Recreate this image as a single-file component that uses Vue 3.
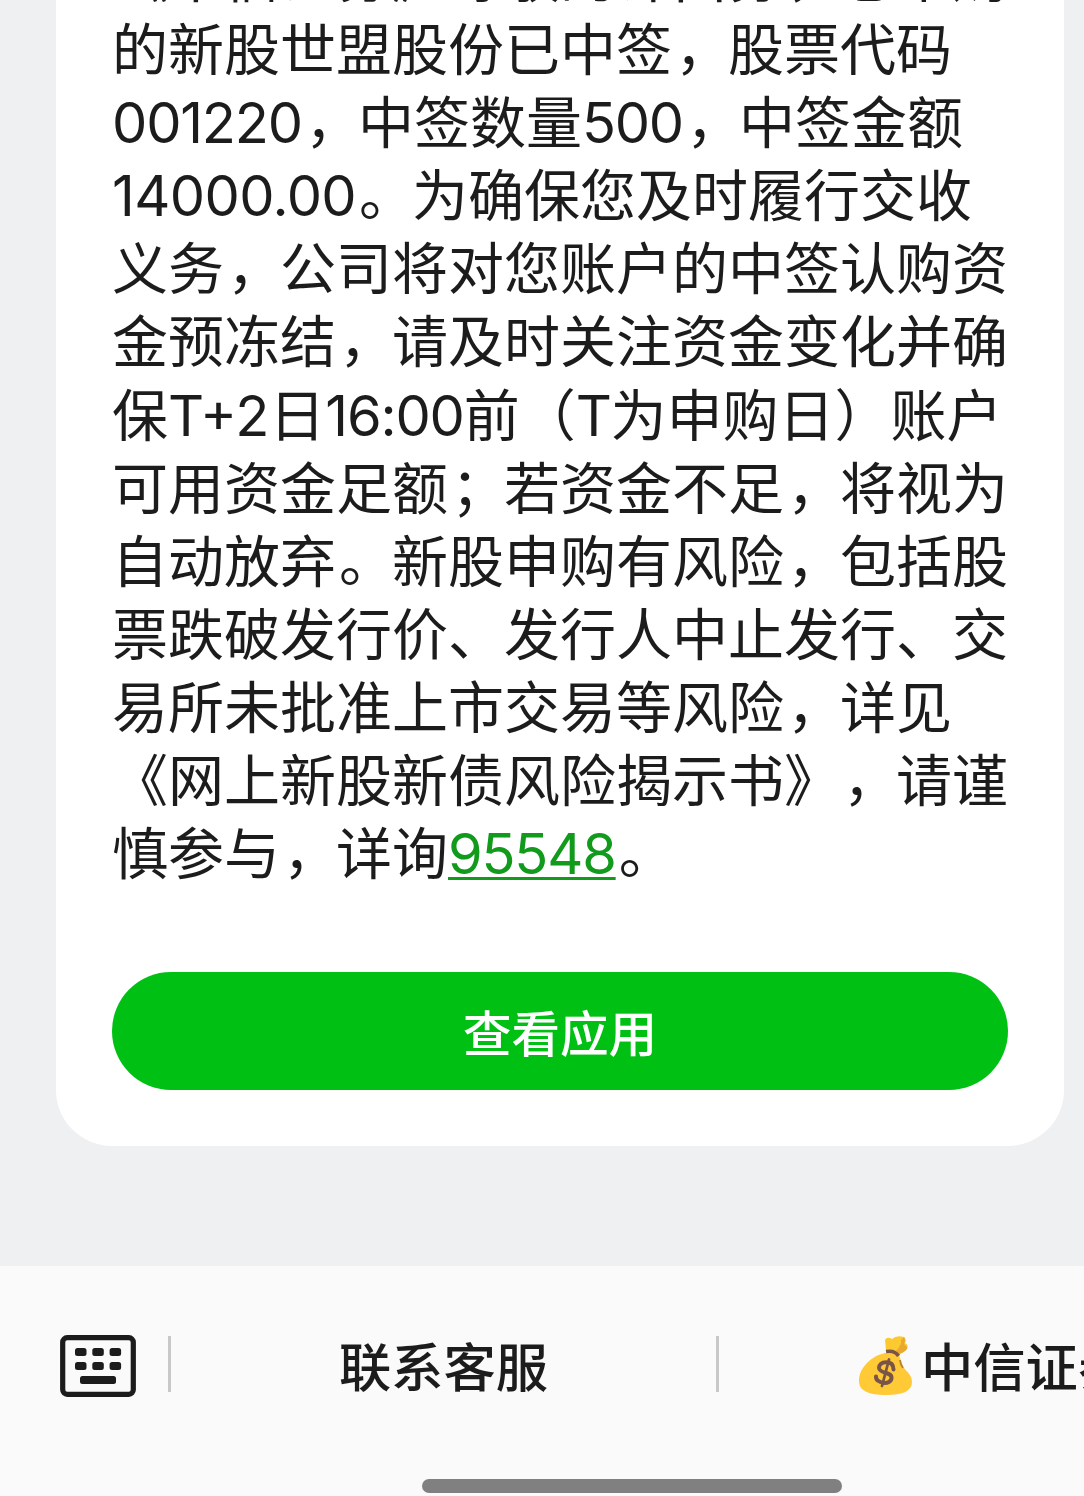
<script setup>
const source = [
  ['《中信证券》尊敬的许昌芬，您申购'],
  ['的新股世盟股份已中签，股票代码'],
  [{ n: '001220', s: -1.2 }, '，中签数量', { n: '500', s: -1.2 }, '，中签金额'],
  [{ n: '14000.00', s: -0.6 }, '。为确保您及时履行交收'],
  ['义务，公司将对您账户的中签认购资'],
  ['金预冻结，请及时关注资金变化并确'],
  ['保', { n: 'T+2', s: 0 }, '日', { n: '16:00', s: -1.2 }, '前（', { n: 'T', s: -1.2 }, '为申购日）账户'],
  ['可用资金足额；若资金不足，将视为'],
  ['自动放弃。新股申购有风险，包括股'],
  ['票跌破发行价、发行人中止发行、交'],
  ['易所未批准上市交易等风险，详见'],
  ['《网上新股新债风险揭示书》，请谨'],
  ['慎参与，详询', { n: '95548', s: -1.2, link: true }, '。'],
]

// Punctuation is set in its own full-width cell
const lines = source.map((line) =>
  line.flatMap((part) => {
    if (part.n) return [part]
    return part
      .split(/([，。；])/)
      .filter(Boolean)
      .map((t) => ({ t, mark: /^[，。；]$/.test(t) }))
  }),
)
</script>

<template>
  <div class="screen">
    <main class="chat">
      <article class="card">
        <div class="message">
          <p v-for="(line, i) in lines" :key="i" class="line">
            <template v-for="(part, j) in line" :key="j">
              <span v-if="part.n" class="num" :class="{ link: part.link }" :style="{ letterSpacing: part.s + 'px' }">{{ part.n }}</span>
              <span v-else :class="{ mark: part.mark }">{{ part.t }}</span>
            </template>
          </p>
        </div>
        <button class="action">查看应用</button>
      </article>
    </main>
    <footer class="bar">
      <div class="menu">
        <svg class="keyboard" width="76" height="62" viewBox="0 0 76 62">
          <rect x="2.7" y="2.7" width="70.6" height="56.6" rx="4.5" fill="none" stroke="#1c1c1c" stroke-width="5.2" />
          <g fill="#1c1c1c">
            <rect x="15" y="13" width="11.5" height="8" rx="2.5" />
            <rect x="32.3" y="13" width="11.5" height="8" rx="2.5" />
            <rect x="49.6" y="13" width="11.5" height="8" rx="2.5" />
            <rect x="15" y="27" width="11.5" height="8" rx="2.5" />
            <rect x="32.3" y="27" width="11.5" height="8" rx="2.5" />
            <rect x="49.6" y="27" width="11.5" height="8" rx="2.5" />
            <rect x="20" y="41" width="36" height="8" rx="2.5" />
          </g>
        </svg>
        <i class="divider"></i>
        <span class="item service">联系客服</span>
        <i class="divider"></i>
        <span class="item broker">
          <svg class="bag" width="54" height="60" viewBox="0 0 54 60">
            <path d="M27 14 L26 4 Q28 0 33 3 Q37-1 45 1 Q48 4 46 7 Q50 9 48 13 L39 20Z" fill="#fdc930" />
            <path d="M42 4 Q43 9 37 15 L40 18 Q49 15 48 11 L45 8 Q47 4 45 1Z" fill="#e9a92e" />
            <path d="M26 17 C12 20 0 32 0 45 C0 55 10 59 27 59 C44 59 53 55 53 46 C53 39 48 36 45 32 C42 27 42 21 38 17Z" fill="#ffca35" />
            <path d="M27 15.5 Q36 14 39.5 20" fill="none" stroke="#795548" stroke-width="3.6" />
            <path d="M41 24 Q41.5 29 44 32" fill="none" stroke="#b5802f" stroke-width="1.8" />
            <g fill="none" stroke="#795548" stroke-linecap="round">
              <path d="M34.5 33.5 C34.5 28 31 26.2 27 26.2 C22.5 26.2 19.8 28.8 20 32 C20.5 38 33 35.5 32.5 42 C32.2 45.5 28.5 47.3 24.5 46.8 C20 46.3 16.8 44 17 40.5" stroke-width="4" />
              <path d="M30 23.5 L23 50" stroke-width="2.8" />
            </g>
          </svg>
          <span>中信证券</span>
        </span>
      </div>
      <div class="home"></div>
    </footer>
  </div>
</template>

<style>
body {
  margin: 0;
}
</style>

<style scoped>
.screen {
  width: 1084px;
  height: 1496px;
  overflow: hidden;
  display: flex;
  flex-direction: column;
  background: #eff0f2;
  color: #1c1c1c;
  font-family: "Noto Sans CJK SC", sans-serif;
}
.chat {
  height: 1266px;
  flex: none;
  overflow: hidden;
}
.card {
  box-sizing: border-box;
  width: 1008px;
  height: 1146px;
  margin-left: 56px;
  padding: 0 56px 56px;
  border-radius: 0 0 56px 56px;
  background: #fff;
  display: flex;
  flex-direction: column;
  justify-content: space-between;
}
.message {
  margin-top: -64px;
}
.line {
  margin: 0;
  height: 73.1px;
  line-height: 73.1px;
  display: flex;
  white-space: nowrap;
  font-size: 56px;
  text-spacing-trim: space-all;
}
.mark {
  box-sizing: border-box;
  width: 56px;
  padding-left: 3px;
  margin-top: -1px;
}
.num {
  margin-top: 5px;
  font-family: Inter, "Noto Sans CJK SC", sans-serif;
}
.link {
  color: #119a1c;
  text-decoration: underline;
  text-decoration-thickness: 3px;
  text-underline-offset: 3px;
}
.action {
  height: 118px;
  flex: none;
  border: 0;
  padding: 0;
  border-radius: 59px;
  background: #00c013;
  color: #fff;
  font: 500 48.5px/118px "Noto Sans CJK SC", sans-serif;
}
.bar {
  flex: 1;
  background: #fafafa;
  display: flex;
  flex-direction: column;
  align-items: center;
  justify-content: space-between;
}
.menu {
  align-self: stretch;
  height: 200px;
  display: flex;
  align-items: center;
  padding-left: 60px;
}
.keyboard {
  flex: none;
  margin-right: 32px;
}
.divider {
  flex: none;
  width: 3px;
  height: 56px;
  margin-top: -4px;
  background: #c8c8c8;
}
.item {
  font-size: 52.3px;
  font-weight: 500;
  line-height: 76px;
  white-space: nowrap;
}
.service {
  width: 545px;
  flex: none;
  margin-top: -5px;
  text-align: center;
}
.broker {
  display: flex;
  align-items: center;
  gap: 8px;
  margin-left: 140px;
}
.broker span {
  margin-top: -5px;
}
.home {
  width: 420px;
  height: 14px;
  margin: 0 0 3px 180px;
  border-radius: 7px;
  background: #808080;
}
</style>
